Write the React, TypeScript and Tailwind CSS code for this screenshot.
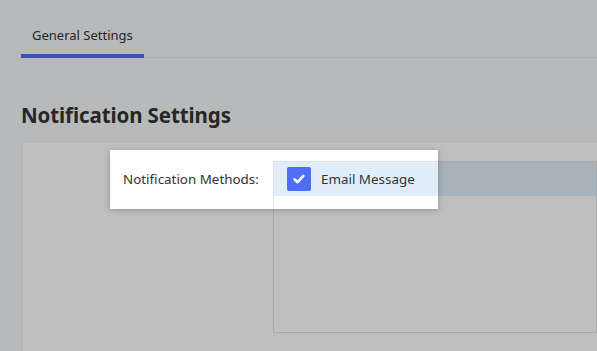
import React from "react";

export default function App() {
  return (
    <div
      className="relative w-[597px] h-[351px] overflow-hidden bg-[#f5f7f9] text-[#333]"
      style={{ fontFamily: '"Noto Sans", "Open Sans", sans-serif' }}
    >
      <div className="pl-[21px]">
        <div className="flex border-b border-[#e6e8eb] pt-[26px]">
          <div className="-mb-px border-b-4 border-[#4f6ef2] px-[11px] pb-[10px] text-[13px] leading-[18px] text-[#333]">
            General Settings
          </div>
        </div>
        <h1 className="mt-[43px] text-[20.5px] font-bold leading-[28px] tracking-[-0.1px] text-[#333]">
          Notification Settings
        </h1>
        <div className="ml-px mt-[12px] h-[300px] rounded-tl-[3px] border-l border-t border-[#eeeeee] bg-white pl-[100px] pt-[19px]">
          <div className="flex">
            <div className="w-[150px] pt-[9px] text-[13.4px] leading-[18px] text-[#333]">
              Notification Methods:
            </div>
            <div className="h-[172px] flex-1 border border-[#e1e1e1]">
              <div className="flex h-[34px] items-center bg-[#e1eefa] pl-[13px]">
                <div className="flex h-[24px] w-[24px] items-center justify-center rounded-[2px] bg-[#4f6ef7]">
                  <svg width="14" height="14" viewBox="0 0 14 14" fill="none">
                    <path d="M2.6 7.4 L5.6 10.2 L11.4 3.9" stroke="white" strokeWidth="2.6" strokeLinecap="round" strokeLinejoin="round" />
                  </svg>
                </div>
                <span className="ml-[10px] text-[13.4px] leading-[18px] text-[#333]">Email Message</span>
              </div>
            </div>
          </div>
        </div>
      </div>
      <div className="absolute left-[110px] top-[150px] h-[59px] w-[328px] shadow-[0_0_0_9999px_rgba(0,0,0,0.25),0_1px_6px_rgba(0,0,0,0.25)]" />
    </div>
  );
}
